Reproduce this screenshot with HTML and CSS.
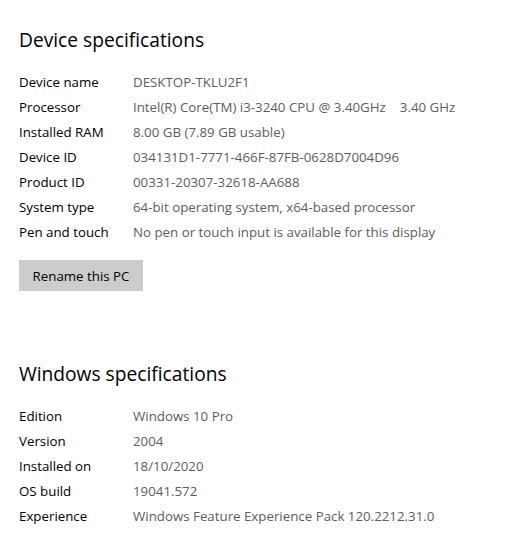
FILE: index.html
```html
<!DOCTYPE html>
<html>
<head>
<meta charset="utf-8">
<link rel="stylesheet" href="styles.css">
</head>
<body>
<div class="page">
  <section class="section">
    <h2 class="title">Device specifications</h2>
    <div class="specs">
      <div class="row"><span class="label">Device name</span><span class="value">DESKTOP-TKLU2F1</span></div>
      <div class="row"><span class="label">Processor</span><span class="value">Intel(R) Core(TM) i3-3240 CPU @ 3.40GHz<span class="gap">3.40 GHz</span></span></div>
      <div class="row"><span class="label">Installed RAM</span><span class="value">8.00 GB (7.89 GB usable)</span></div>
      <div class="row"><span class="label">Device ID</span><span class="value">034131D1-7771-466F-87FB-0628D7004D96</span></div>
      <div class="row"><span class="label">Product ID</span><span class="value">00331-20307-32618-AA688</span></div>
      <div class="row"><span class="label">System type</span><span class="value">64-bit operating system, x64-based processor</span></div>
      <div class="row"><span class="label">Pen and touch</span><span class="value">No pen or touch input is available for this display</span></div>
    </div>
    <button class="btn">Rename this PC</button>
  </section>
  <section class="section second">
    <h2 class="title">Windows specifications</h2>
    <div class="specs">
      <div class="row"><span class="label">Edition</span><span class="value">Windows 10 Pro</span></div>
      <div class="row"><span class="label">Version</span><span class="value">2004</span></div>
      <div class="row"><span class="label">Installed on</span><span class="value">18/10/2020</span></div>
      <div class="row"><span class="label">OS build</span><span class="value">19041.572</span></div>
      <div class="row"><span class="label">Experience</span><span class="value">Windows Feature Experience Pack 120.2212.31.0</span></div>
    </div>
  </section>
</div>
</body>
</html>
```
FILE: styles.css
```css
html, body {
  margin: 0;
  padding: 0;
  background: #ffffff;
}
.page {
  padding: 26px 19px 0 19px;
  font-family: "Open Sans", "Noto Sans", sans-serif;
  color: #000000;
}
.title {
  margin: 0;
  font-size: 19.2px;
  font-weight: 400;
  line-height: 28px;
  color: #000;
}
.specs {
  margin-top: 15px;
}
.row {
  display: flex;
  height: 25px;
  align-items: center;
  font-size: 13.3px;
}
.label {
  width: 114px;
  flex: none;
  color: #000;
}
.value {
  color: #5d5d5d;
  white-space: nowrap;
}
.gap {
  margin-left: 14px;
}
.btn {
  margin-top: 16px;
  display: block;
  width: 124px;
  height: 31px;
  border: none;
  background: #cccccc;
  font-family: inherit;
  font-size: 13.3px;
  color: #000;
  padding: 0;
}
.second {
  margin-top: 69px;
}
```
